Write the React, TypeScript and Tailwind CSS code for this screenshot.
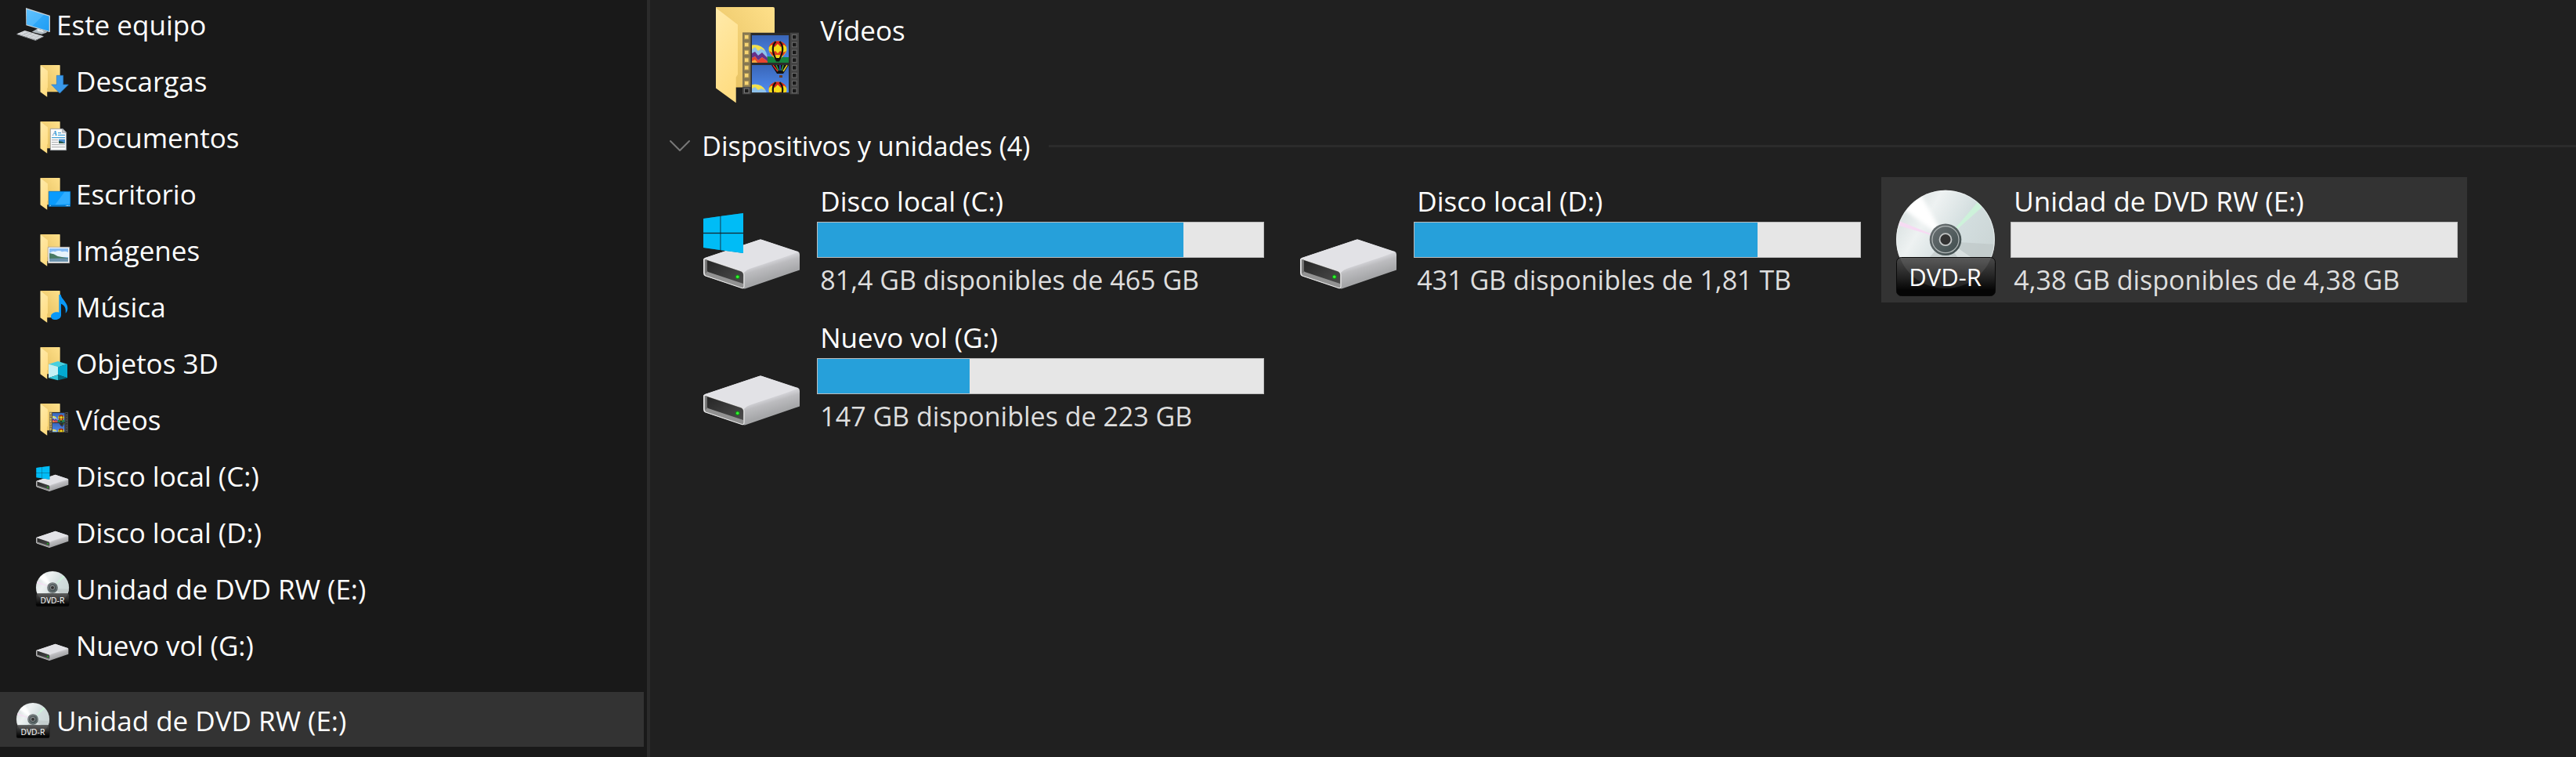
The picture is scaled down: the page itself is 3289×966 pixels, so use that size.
import { ChevronDown } from "lucide-react";
import type { ReactNode } from "react";

type IconName =
  | "pc"
  | "downloads"
  | "documents"
  | "desktop"
  | "pictures"
  | "music"
  | "objects"
  | "videos"
  | "system-drive"
  | "drive"
  | "dvd";

type Drive = {
  name: string;
  icon: IconName;
  detail: string;
  used: number;
  selected?: boolean;
};

const treeItems: { label: string; icon: IconName }[] = [
  { label: "Descargas", icon: "downloads" },
  { label: "Documentos", icon: "documents" },
  { label: "Escritorio", icon: "desktop" },
  { label: "Imágenes", icon: "pictures" },
  { label: "Música", icon: "music" },
  { label: "Objetos 3D", icon: "objects" },
  { label: "Vídeos", icon: "videos" },
  { label: "Disco local (C:)", icon: "system-drive" },
  { label: "Disco local (D:)", icon: "drive" },
  { label: "Unidad de DVD RW (E:)", icon: "dvd" },
  { label: "Nuevo vol (G:)", icon: "drive" },
];

const drives: Drive[] = [
  { name: "Disco local (C:)", icon: "system-drive", detail: "81,4 GB disponibles de 465 GB", used: 82 },
  { name: "Disco local (D:)", icon: "drive", detail: "431 GB disponibles de 1,81 TB", used: 77 },
  { name: "Unidad de DVD RW (E:)", icon: "dvd", detail: "4,38 GB disponibles de 4,38 GB", used: 0, selected: true },
  { name: "Nuevo vol (G:)", icon: "drive", detail: "147 GB disponibles de 223 GB", used: 34 },
];

function Folder({ children }: { children: ReactNode }) {
  return (
    <>
      <defs>
        <linearGradient id="folder-back" x1="0" y1="1" x2="1" y2="0">
          <stop offset="0" stopColor="#e3bd5c" />
          <stop offset="1" stopColor="#ffe08a" />
        </linearGradient>
        <linearGradient id="folder-front" x1="0" y1="0" x2="0.3" y2="1">
          <stop offset="0" stopColor="#ffeaaa" />
          <stop offset="1" stopColor="#ffdd83" />
        </linearGradient>
      </defs>
      <path d="M26 15H99a2 2 0 0 1 2 2V117.500H26Z" fill="url(#folder-back)" />
      <path d="M26 16 54 37.500V101L51.700 104.500V137.300L26 118.500Z" fill="url(#folder-front)" />
      {children}
    </>
  );
}

function Balloon({ y }: { y: number }) {
  return (
    <g transform={`translate(105 ${y})`}>
      <path d="M-11.500 10C-11.500-4 11.500-4 11.500 10 11.500 16 4 20 2.500 24h-5C-4 20-11.500 16-11.500 10Z" fill="#f3dc1c" />
      <path d="M-11 7C-9-3 9-3 11 7L8 4 4 7 0 3-4 7-8 4Z" fill="#d8261c" />
      <path d="M-11 12-7 14-3 12 0 15 3 12 7 14 11 12 7 18 0 17-7 18Z" fill="#e03a1e" />
      <path d="M-2.500 0C-8 6-7 14-2 23M2.500 0C8 6 7 14 2 23" fill="none" stroke="#16130c" strokeWidth="2.200" />
      <path d="M-4 21H4L2 25.500H-2Z" fill="#111" />
    </g>
  );
}

function Film() {
  const holes = [0, 1, 2, 3, 4, 5, 6, 7];
  return (
    <>
      <defs>
        <linearGradient id="film-sky" x1="0" y1="0" x2="0" y2="1">
          <stop offset="0" stopColor="#3a66b8" />
          <stop offset="1" stopColor="#4f8cf0" />
        </linearGradient>
        <clipPath id="film-top"><path d="M72 51h47v35H72Z" /></clipPath>
        <clipPath id="film-bottom"><path d="M72 89h47v35H72Z" /></clipPath>
      </defs>
      <path d="M60 47.700H132V126.300H60Z" fill="#2b2b2b" />
      <path d="M60 47.700H70.500V117H60Z" fill="#857752" />
      <path d="M60 117H70.500V126.300H60ZM121 47.700H132V126.300H121Z" fill="#454545" />
      {holes.map((hole) => (
        <g key={hole} strokeWidth="1">
          <rect x="62.500" y={50.500 + hole * 9.800} width="5.500" height="5.500" fill={hole < 7 ? "#f7d573" : "#1c1c1c"} stroke={hole < 7 ? "#a58f55" : "#777"} />
          <rect x="123.500" y={50.500 + hole * 9.800} width="5.500" height="5.500" fill="#181818" stroke="#6a6a6a" />
        </g>
      ))}
      <g clipPath="url(#film-top)">
        <path d="M72 51h47v35H72Z" fill="url(#film-sky)" />
        <path d="M90 78 119 79V86H90Z" fill="#16843d" />
        <circle cx="76" cy="79" r="15.500" fill="#8ec1ea" />
        <path d="M72 63.500Q84 62 89 71L84 68 80 71 76 66 72 69Z" fill="#f2e04c" />
        <path d="M72 74 76 72 80 77 85 73 92 80V84L85 79 80 83 76 78 72 80Z" fill="#65318b" />
        <path d="M72 80 76 78 80 83 85 79 92 84V87H72Z" fill="#e8452d" />
        <path d="M72 84 76 82 80 87H72Z" fill="#f4a83b" />
        <Balloon y={59} />
      </g>
      <g clipPath="url(#film-bottom)">
        <path d="M72 89h47v35H72Z" fill="url(#film-sky)" />
        <path d="M97 89H119L112 100H104Z" fill="#111" />
        <path d="M99 89 105 97" stroke="#e22b25" strokeWidth="1.500" />
        <path d="M103 89 106 96" stroke="#37a542" strokeWidth="1.500" />
        <path d="M108 89V96" stroke="#2744ba" strokeWidth="1.800" />
        <path d="M112 89 110 96" stroke="#37a542" strokeWidth="1.500" />
        <path d="M117 89 112 97" stroke="#ecd32a" strokeWidth="1.500" />
        <path d="M107 102h4v3h-4Z" fill="#6b3c20" />
        <circle cx="76" cy="129" r="15.500" fill="#8ec1ea" />
        <path d="M72 114Q84 112 89 121L84 119 80 121 76 117 72 119Z" fill="#f2e04c" />
        <Balloon y={111} />
      </g>
    </>
  );
}

function DriveShape() {
  return (
    <>
      <defs>
        <linearGradient id="drive-side" gradientUnits="userSpaceOnUse" x1="92" y1="97" x2="99" y2="120">
          <stop offset="0" stopColor="#e0e0e5" />
          <stop offset="0.400" stopColor="#bcbcbf" />
          <stop offset="1" stopColor="#a5a6a8" />
        </linearGradient>
        <linearGradient id="drive-front" x1="0" y1="0" x2="1" y2="1">
          <stop offset="0" stopColor="#262626" />
          <stop offset="1" stopColor="#4c4c4c" />
        </linearGradient>
      </defs>
      <path d="M10 97 12 95 81 72Q83 71 85 72L131 87Q133 88 133 91V110.500L63 134.500 60 134 12 118Q10 117 10 114Z" fill="url(#drive-side)" />
      <path d="M11 95.500 81 72Q83 71 85 72L131 87.500Q120 92 108 96L72 108Q65 110 62 114Q60 111 56 110Z" fill="#e2e2e6" />
      <path d="M11 96.500Q10.500 96 13 96.500L58 111.500Q62 113 62 117V131Q62 134.500 59 133.500L13 118Q11 117 11 114Z" fill="#929292" stroke="#e8e8e8" strokeWidth="1.200" />
      <path d="M14.500 98 58 112.500Q61 114 61 117V128L16 113Q14.500 112.500 14.500 110Z" fill="url(#drive-front)" />
      <path d="M12.500 97.500H15V113L12.500 115Z" fill="#707070" />
      <circle cx="53.700" cy="119.300" r="2.800" fill="#158819" />
      <circle cx="53.700" cy="119.300" r="1.800" fill="#31f52e" />
    </>
  );
}

function Dvd() {
  return (
    <>
      <defs>
        <linearGradient id="disc" x1="0" y1="0" x2="1" y2="0.600">
          <stop offset="0" stopColor="#cdd7d7" />
          <stop offset="0.350" stopColor="#eef2f2" />
          <stop offset="0.650" stopColor="#d3dedf" />
          <stop offset="1" stopColor="#cbd5d5" />
        </linearGradient>
        <linearGradient id="hub" x1="0" y1="0" x2="1" y2="1">
          <stop offset="0" stopColor="#6c7274" />
          <stop offset="1" stopColor="#3d4b4c" />
        </linearGradient>
        <linearGradient id="dvd-label" x1="0" y1="0" x2="0" y2="1">
          <stop offset="0" stopColor="#4a4a4a" />
          <stop offset="0.500" stopColor="#242424" />
          <stop offset="0.850" stopColor="#050505" />
        </linearGradient>
        <clipPath id="disc-clip"><circle cx="72" cy="71.700" r="62.500" /></clipPath>
        <filter id="beam"><feGaussianBlur stdDeviation="2.500" /></filter>
      </defs>
      <circle cx="72" cy="71.700" r="63" fill="url(#disc)" />
      <g clipPath="url(#disc-clip)">
        <path d="M72 71.700 14 30 35 4Z" fill="#fff" filter="url(#beam)" />
        <path d="M72 71.700 8 46 10 53Z" fill="#f6dbf3" />
        <path d="M72 71.700 113 24 119 30Z" fill="#cdf2da" />
        <path d="M72 74 140 78V125L88 110Z" fill="#bfc8c8" opacity="0.700" />
        <path d="M72 71.700 50 96H96Z" fill="#c4cccc" opacity="0.800" />
        <path d="M72 71.700 90 98H110Z" fill="#e3e8e8" opacity="0.700" />
      </g>
      <circle cx="72" cy="71.700" r="62.500" fill="none" stroke="#f1f5f5" strokeOpacity="0.600" />
      <circle cx="72" cy="71.700" r="20.300" fill="url(#hub)" />
      <circle cx="72" cy="71.700" r="17" fill="none" stroke="#b2b8b8" strokeWidth="1.200" />
      <circle cx="72" cy="71.700" r="7.500" fill="#333" stroke="#c3c6c6" strokeWidth="1.800" />
      <rect x="9.500" y="94.500" width="126" height="49" rx="6" fill="url(#dvd-label)" stroke="#0a0a0a" />
      <path d="M14 95H130C124 112 104 134 72 134S20 112 14 95Z" fill="#fff" fillOpacity="0.090" />
      <text x="71.500" y="130.500" textAnchor="middle" fontFamily="Open Sans, sans-serif" fontSize="31" fill="#fff">DVD-R</text>
    </>
  );
}

function Pc() {
  return (
    <>
      <defs>
        <linearGradient id="pc-screen" x1="0" y1="0" x2="1" y2="1">
          <stop offset="0" stopColor="#5ec1ff" />
          <stop offset="0.500" stopColor="#4cb6fb" />
          <stop offset="0.520" stopColor="#2fa8f8" />
          <stop offset="1" stopColor="#209ef4" />
        </linearGradient>
      </defs>
      <path d="M68 104 88 92 126 102 124 107 105 113Z" fill="#aeb8bf" />
      <path d="M88 91 112 98V106L90 101Z" fill="#dfe5e8" />
      <path d="M45 12 137 41 138 44V104L135 105 46 79Z" fill="#c8d0d5" />
      <path d="M48 17 134 44V101L48 76Z" fill="url(#pc-screen)" />
      <path d="M10 112 41 99 113 121 82 135Z" fill="#e6e8eb" />
      <path d="M10 112 82 135 113 121V123L82 138 10 114Z" fill="#8d9297" />
      <path d="M20 110 88 131M29 106 98 127M38 103 106 123M31 118 56 105M45 122 70 109M59 127 84 113M72 131 98 118" stroke="#a5aaaf" strokeWidth="2" />
    </>
  );
}

function ItemIcon({ name, className }: { name: IconName; className: string }) {
  return (
    <svg viewBox="0 0 144 144" className={className} aria-hidden="true">
      {name === "pc" && <Pc />}
      {name === "downloads" && (
        <Folder>
          <path d="M88 55h25v35h20L100 123 68 90h20Z" fill="#3a99ea" stroke="#2478c4" strokeWidth="2" />
        </Folder>
      )}
      {name === "documents" && (
        <Folder>
          <path d="M64 43h47l14 14v68H64Z" fill="#fafafa" stroke="#8d9196" strokeWidth="2.500" />
          <path d="M110 43v15h15Z" fill="#c9ccd0" stroke="#8d9196" strokeWidth="2" />
          <text x="72" y="69" fontFamily="Liberation Serif, serif" fontStyle="italic" fontWeight="700" fontSize="27" fill="#1e8fd0">A</text>
          <path d="M93 59h12M93 67h27M69 77h51" stroke="#1e8fd0" strokeWidth="3" />
          <path d="M69 86h24M69 95h24M69 104h51M69 113h51" stroke="#a5a8ab" strokeWidth="3" />
          <path d="M96 83h24v16H96Z" fill="#4b8fcf" />
          <path d="M96 90q12-1 24 9H96Z" fill="#2d5a4b" />
        </Folder>
      )}
      {name === "desktop" && (
        <Folder>
          <path d="M58 67h82v57H58Z" fill="#0a9bfd" stroke="#0672c4" strokeWidth="2.500" />
          <path d="M118 69h21v46L82 118Z" fill="#2facff" />
          <path d="M60 119h79v4H60Z" fill="#0873c0" />
          <path d="M62 121h3M124 121h3M129 121h3M134 121h3" stroke="#fff" strokeWidth="3" />
        </Folder>
      )}
      {name === "pictures" && (
        <Folder>
          <path d="M55 64h82v61H55Z" fill="#fff" stroke="#9b9b9b" strokeWidth="2.500" />
          <path d="M60 69h72v51H60Z" fill="#86bcf5" />
          <path d="M60 88q12-12 22-6 16-8 26 0 14-4 24 2v18H60Z" fill="#e7f3fb" />
          <path d="M60 87q18 2 32 12 20 4 40 7v5H60Z" fill="#487a63" />
          <path d="M60 108q36-3 72-1v13H60Z" fill="#6d93ad" />
        </Folder>
      )}
      {name === "music" && (
        <Folder>
          <path d="M97 30h7c1 16 26 29 26 52 0 8-3 15-8 19 3-19-4-31-17-36v43c0 11-9 18-22 18-10 0-17-5-17-13 0-11 15-20 31-15Z" fill="#0a98f7" />
        </Folder>
      )}
      {name === "objects" && (
        <Folder>
          <path d="M57 80 93 69 129 80 93 91Z" fill="#47cfe0" />
          <path d="M57 80 93 91V121L57 133Z" fill="#c5f0f5" />
          <path d="M93 91 129 80V133L93 121Z" fill="#03a9d0" />
          <path d="M57 133 93 121V142Z" fill="#35c6da" />
          <path d="M93 121 129 133 93 142Z" fill="#056b80" />
        </Folder>
      )}
      {name === "videos" && <Folder><Film /></Folder>}
      {(name === "drive" || name === "system-drive") && <DriveShape />}
      {name === "system-drive" && (
        <>
          <path d="M10 45 61 38V89L10 82Z" fill="#0b6f93" />
          <path d="M10 63.500H61" stroke="#122b35" strokeWidth="1.500" />
          <path d="M10 45 31 42V62.800H10ZM32.700 41.800 61 38V62.800H32.700ZM10 64.200H31V85L10 82ZM32.700 64.200H61V89L32.700 85.200Z" fill="#00bcf6" />
        </>
      )}
      {name === "dvd" && <Dvd />}
    </svg>
  );
}

function TreeLink({ label, icon, nested }: { label: string; icon: IconName; nested?: boolean }) {
  return (
    <a href="#" className={`flex h-[72px] items-center gap-1.5 ${nested ? "pl-[43px]" : "pl-[18px]"}`}>
      <ItemIcon name={icon} className="size-12 shrink-0" />
      <span className="pt-1 whitespace-nowrap">{label}</span>
    </a>
  );
}

function DriveTile({ drive }: { drive: Drive }) {
  return (
    <a href="#" className={`flex h-40 w-[748px] items-start pr-3 pl-[10px] ${drive.selected ? "bg-[#333333]" : ""}`}>
      <ItemIcon name={drive.icon} className="mt-2 size-36 shrink-0" />
      <span className="ml-[11px] flex min-w-0 flex-1 flex-col pt-[7px]">
        <span className="pl-1">{drive.name}</span>
        <span
          role="progressbar"
          aria-label={drive.name}
          aria-valuenow={drive.used}
          className="mt-0.5 block h-[46px] border border-[#bcbcbc] bg-[#e6e6e6]"
        >
          <span className="block h-full bg-[#26a0da]" style={{ width: `${drive.used}%` }} />
        </span>
        <span className="mt-1 pl-1 text-[34px] text-[#dedede]">{drive.detail}</span>
      </span>
    </a>
  );
}

export default function App() {
  return (
    <div className="flex h-screen overflow-hidden bg-[#202020] font-['Open_Sans',sans-serif] text-[35px] leading-[48px] text-white">
      <nav className="w-1/4 shrink-0 bg-[#191919]">
        <div className="-mt-1.5">
          <TreeLink label="Este equipo" icon="pc" />
          {treeItems.map((item) => (
            <TreeLink key={item.label} label={item.label} icon={item.icon} nested />
          ))}
        </div>
        <a href="#" className="mt-[25px] flex h-[70px] items-center gap-1.5 bg-[#333333] pl-[18px]">
          <ItemIcon name="dvd" className="size-12 shrink-0" />
          <span className="pt-1 whitespace-nowrap">Unidad de DVD RW (E:)</span>
        </a>
      </nav>
      <div className="w-2 shrink-0 border-r-4 border-l-4 border-r-[#2b2b2b] border-l-[#191919]" />

      <main className="-mt-3.5 min-w-0 flex-1">
        <a href="#" className="ml-12 flex h-40 w-[748px] items-start pl-[10px]">
          <ItemIcon name="videos" className="mt-2 size-36 shrink-0" />
          <span className="ml-[11px] pt-[29px] pl-1">Vídeos</span>
        </a>

        <div className="flex h-20 items-center">
          <button type="button" aria-expanded="true" className="flex items-center gap-1 pl-[14px] text-[34px] whitespace-nowrap">
            <ChevronDown className="size-12 text-[#777777]" strokeWidth={1} />
            Dispositivos y unidades (4)
          </button>
          <span className="ml-6 h-[3px] flex-1 bg-[#2b2b2b]" />
        </div>

        <div className="ml-12 flex flex-wrap gap-3.5">
          {drives.map((drive) => (
            <DriveTile key={drive.name} drive={drive} />
          ))}
        </div>
      </main>
    </div>
  );
}
